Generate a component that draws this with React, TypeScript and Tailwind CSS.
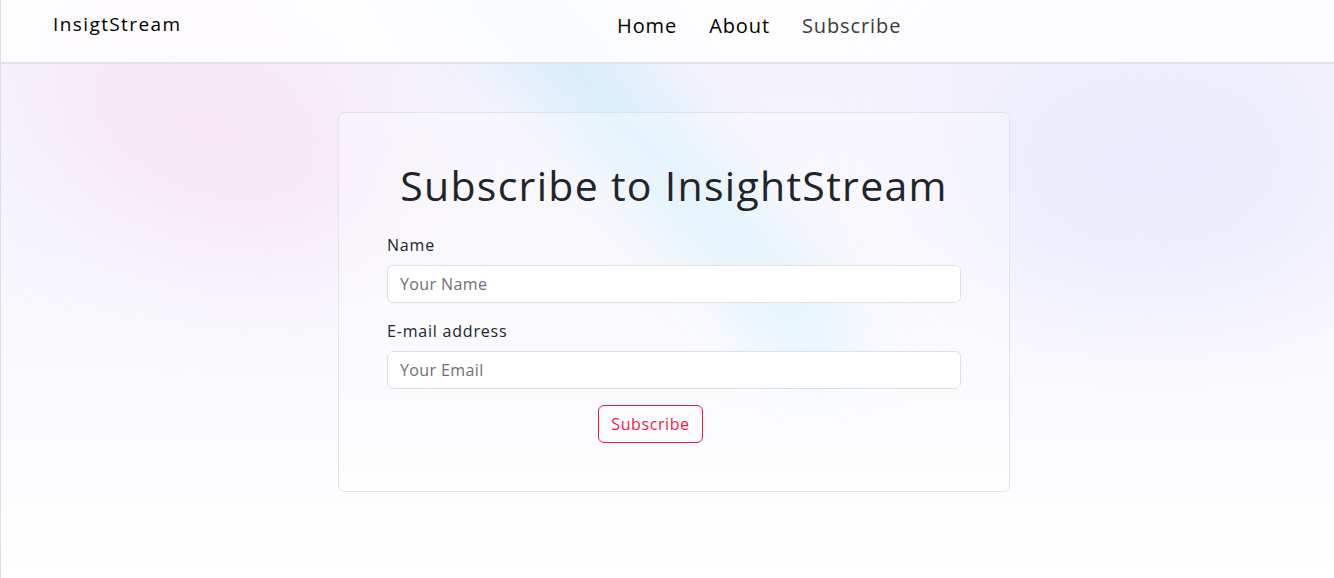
import React from 'react';

const navLinks = [
    { label: 'Home', active: false },
    { label: 'About', active: false },
    { label: 'Subscribe', active: true },
];

function Backdrop() {
    return (
        <div className="absolute inset-0 pointer-events-none overflow-hidden">
            <div className="absolute inset-0 bg-[linear-gradient(180deg,#f3f1fb_0%,#f6f5fc_40%,#fbfbfe_75%,#ffffff_100%)]" />
            <div className="absolute left-[40px] top-[30px] w-[340px] h-[200px] rounded-full bg-[#f8dcef] opacity-60 blur-3xl rotate-[25deg]" />
            <div className="absolute left-[620px] top-[-130px] w-[55px] h-[560px] bg-[#bfe9fb] opacity-90 blur-2xl -rotate-[42deg]" />
            <div className="absolute left-[960px] top-[40px] w-[380px] h-[260px] rounded-full bg-[#e6e8fd] opacity-70 blur-3xl" />
        </div>
    );
}

export default function App() {
    return (
        <div className="relative min-h-screen overflow-hidden border-l border-[#dcdfe4] font-['Open_Sans',sans-serif] text-[#212529]">
            <Backdrop />
            <div className="relative">
                <header className="flex items-start h-[64px] border-b-2 border-[#e1e4e8] bg-white/80">
                    <div className="w-[616px] pl-[52px] pt-[10px]">
                        <span className="text-[19px] leading-7 tracking-[1.4px] text-black">InsigtStream</span>
                    </div>
                    <nav className="flex items-center gap-[32px] pt-[12px]">
                        {navLinks.map((link) => (
                            <a
                                key={link.label}
                                href="#"
                                className={
                                    link.active
                                        ? 'text-[20px] leading-7 tracking-[0.9px] text-[#3b3b3b]'
                                        : 'text-[20px] leading-7 tracking-[0.9px] text-black'
                                }
                            >
                                {link.label}
                            </a>
                        ))}
                    </nav>
                </header>

                <main className="flex justify-center pl-[13px] pt-[48px]">
                    <div className="w-[672px] rounded-md border border-[#e0e3e8] bg-white/30 px-12 pt-12 pb-12">
                        <h1 className="text-center text-[41px] leading-[48px] tracking-[1.3px] text-[#212529] mb-6">
                            Subscribe to InsightStream
                        </h1>
                        <form className="flex flex-col" onSubmit={(e) => e.preventDefault()}>
                            <label className="text-[16px] leading-6 tracking-[0.8px] mb-2">Name</label>
                            <input
                                type="text"
                                placeholder="Your Name"
                                className="h-[38px] rounded-md border border-[#dee2e6] bg-white px-3 text-[16px] tracking-[0.4px] placeholder:text-[#6c6f78] outline-none mb-4"
                            />
                            <label className="text-[16px] leading-6 tracking-[0.8px] mb-2">E-mail address</label>
                            <input
                                type="email"
                                placeholder="Your Email"
                                className="h-[38px] rounded-md border border-[#dee2e6] bg-white px-3 text-[16px] tracking-[0.4px] placeholder:text-[#6c6f78] outline-none mb-4"
                            />
                            <div>
                                <button
                                    type="submit"
                                    className="ml-[211px] h-[38px] w-[105px] rounded-md border border-[#ec1c3e] text-[16px] tracking-[0.6px] text-[#ec1c3e]"
                                >
                                    Subscribe
                                </button>
                            </div>
                        </form>
                    </div>
                </main>
            </div>
        </div>
    );
}
